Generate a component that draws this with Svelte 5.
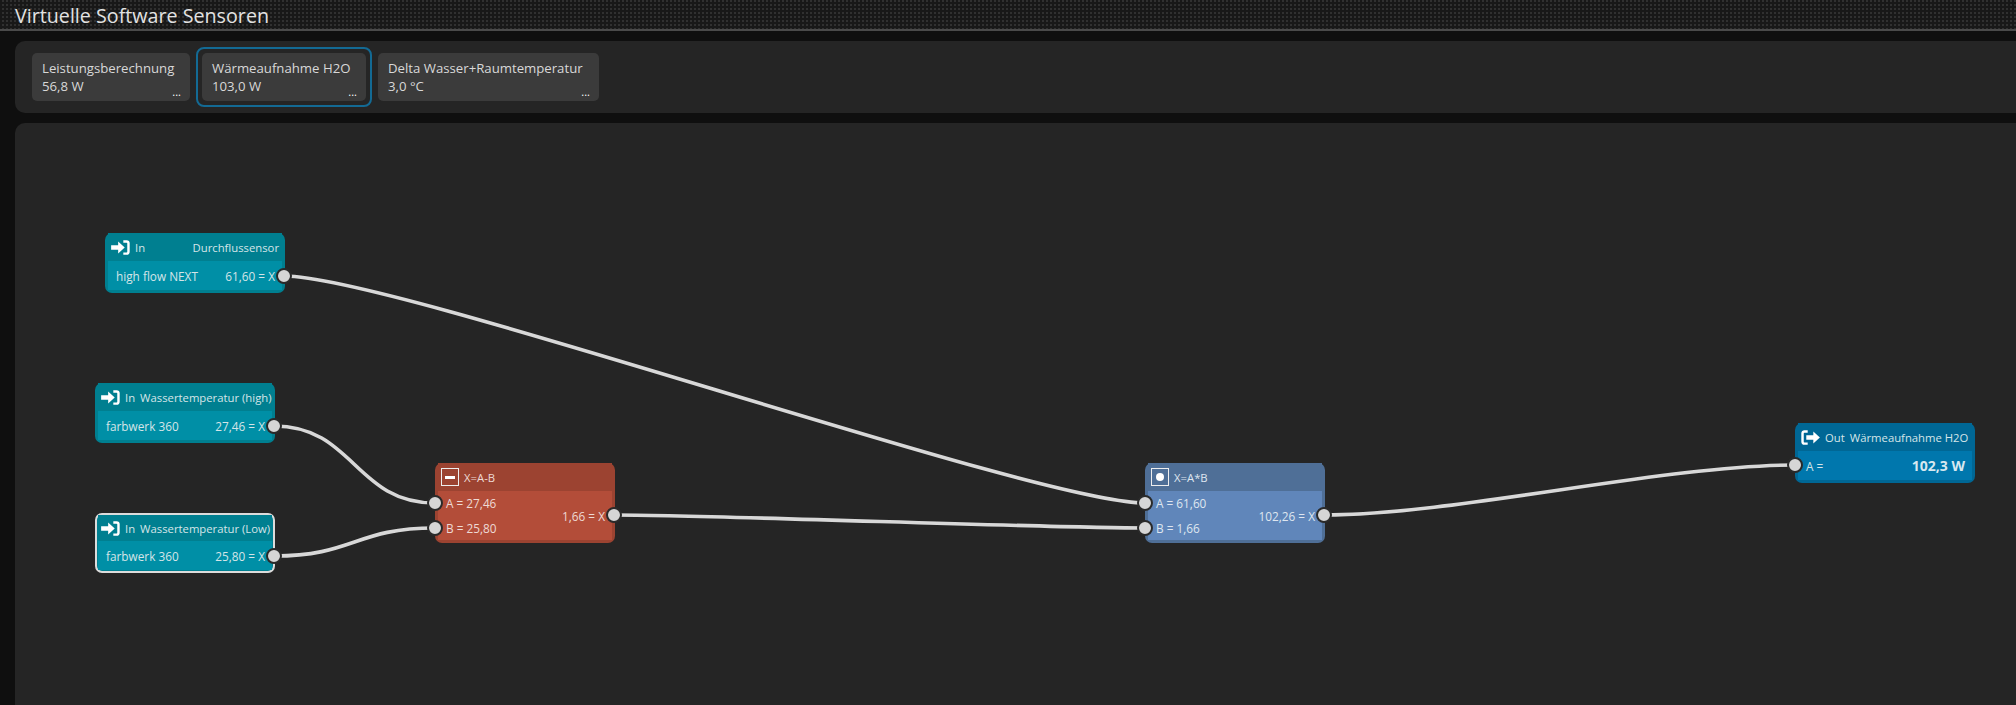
<script>
    const tiles = [
        { name: 'Leistungsberechnung', value: '56,8 W', width: 158 },
        { name: 'Wärmeaufnahme H2O', value: '103,0 W', width: 164, selected: true },
        { name: 'Delta Wasser+Raumtemperatur', value: '3,0 °C', width: 221 }
    ];

    // canvas coordinates are page coordinates minus the canvas origin
    const originX = 15;
    const originY = 123;

    const nodes = [
        { id: 'flow', kind: 'input', icon: 'in', x: 105, y: 233, h: 60, label: 'In', title: 'Durchflussensor', titleEnd: true, left: ['high flow NEXT'], right: '61,60 = X' },
        { id: 'high', kind: 'input', icon: 'in', x: 95, y: 383, h: 60, label: 'In', title: 'Wassertemperatur (high)', left: ['farbwerk 360'], right: '27,46 = X' },
        { id: 'low', kind: 'input', icon: 'in', x: 95, y: 513, h: 60, label: 'In', title: 'Wassertemperatur (Low)', left: ['farbwerk 360'], right: '25,80 = X', active: true },
        { id: 'sub', kind: 'minus', icon: 'minus', x: 435, y: 463, h: 80, label: 'X=A-B', left: ['A = 27,46', 'B = 25,80'], right: '1,66 = X', inputs: [40, 65] },
        { id: 'mul', kind: 'times', icon: 'dot', x: 1145, y: 463, h: 80, label: 'X=A*B', left: ['A = 61,60', 'B = 1,66'], right: '102,26 = X', inputs: [40, 65] },
        { id: 'out', kind: 'output', icon: 'out', x: 1795, y: 423, h: 60, label: 'Out', title: 'Wärmeaufnahme H2O', left: ['A ='], total: '102,3 W', inputs: [42] }
    ];

    const wires = [
        [284, 276, 1145, 503, 110],
        [274, 426, 435, 503, 80],
        [274, 556, 435, 528, 80],
        [614, 515, 1145, 528, 100],
        [1324, 515, 1795, 465, 130]
    ];

    function wirePath([x1, y1, x2, y2, bend]) {
        const ax = x1 - originX;
        const ay = y1 - originY;
        const bx = x2 - originX;
        const by = y2 - originY;
        return `M${ax} ${ay} C${ax + bend} ${ay} ${bx - bend} ${by} ${bx} ${by}`;
    }
</script>

<div class="page">
    <header class="title-bar">
        <h1>Virtuelle Software Sensoren</h1>
    </header>

    <section class="toolbar">
        {#each tiles as tile}
            <div class="tile-wrap" class:selected={tile.selected}>
                <div class="tile" style="width: {tile.width}px">
                    <div class="tile-name">{tile.name}</div>
                    <div class="tile-value">{tile.value}</div>
                    <span class="tile-more">...</span>
                </div>
            </div>
        {/each}
    </section>

    <section class="canvas">
        <svg class="wires" width="2001" height="582">
            {#each wires as wire}
                <path d={wirePath(wire)} />
            {/each}
        </svg>

        {#each nodes as node}
            <div
                class="node {node.kind}"
                class:active={node.active}
                style="left: {node.x - originX}px; top: {node.y - originY}px; height: {node.h}px"
            >
                <div class="node-head">
                    {#if node.icon === 'in'}
                        <svg class="icon" viewBox="0 0 20 16" width="19" height="15">
                            <path d="M0 5.5h7.5V1.500L14.500 8l-7 6.500v-4H0z" fill="#fff" />
                            <path d="M13 1.500h3.500a2 2 0 0 1 2 2v9a2 2 0 0 1-2 2H13" fill="none" stroke="#fff" stroke-width="2.6" />
                        </svg>
                    {:else if node.icon === 'out'}
                        <svg class="icon" viewBox="0 0 20 16" width="19" height="15">
                            <path d="M7 1.500H3.500a2 2 0 0 0-2 2v9a2 2 0 0 0 2 2H7" fill="none" stroke="#fff" stroke-width="2.6" />
                            <path d="M5.500 5.500H13V1.500L20 8l-7 6.500v-4H5.500z" fill="#fff" />
                        </svg>
                    {:else}
                        <span class="op-box">
                            {#if node.icon === 'minus'}
                                <span class="op-minus"></span>
                            {:else}
                                <span class="op-dot"></span>
                            {/if}
                        </span>
                    {/if}
                    <span class="node-label">{node.label}</span>
                    {#if node.title}
                        <span class="node-title" class:push={node.titleEnd}>{node.title}</span>
                    {/if}
                </div>
                <div class="node-body">
                    <div class="left-col">
                        {#each node.left as line}
                            <div>{line}</div>
                        {/each}
                    </div>
                    {#if node.right}
                        <div class="right-col">{node.right}</div>
                    {/if}
                    {#if node.total}
                        <div class="total">{node.total}</div>
                    {/if}
                </div>

                {#each node.inputs ?? [] as top}
                    <span class="port port-in" style="top: {top}px"></span>
                {/each}
                {#if node.right}
                    <span class="port port-out"></span>
                {/if}
            </div>
        {/each}
    </section>
</div>

<style>
    :global(body) {
        margin: 0;
        background: #0f0f0f;
    }

    .page {
        height: 705px;
        overflow: hidden;
        font-family: "Open Sans", "Noto Sans", sans-serif;
        color: #d8d8d8;
    }

    .title-bar {
        height: 29px;
        border-bottom: 2px solid #4a4a4a;
        background-color: #181818;
        background-image: conic-gradient(#303030 25%, transparent 0);
        background-size: 4px 4px;
        padding-left: 15px;
    }

    h1 {
        margin: 0;
        font-size: 19.7px;
        line-height: 31px;
        font-weight: 400;
        color: #e2e2e2;
    }

    .toolbar {
        box-sizing: border-box;
        height: 72px;
        margin: 10px 0 10px 15px;
        padding: 0 12px;
        display: flex;
        align-items: center;
        gap: 2px;
        background: #252525;
        border-radius: 10px 0 0 10px;
    }

    .tile-wrap {
        flex: none;
        padding: 3px;
        border: 2px solid transparent;
        border-radius: 8px;
    }

    .tile-wrap.selected {
        padding: 4px;
        margin: 0 -1px;
        border-color: #136a94;
    }

    .tile {
        box-sizing: border-box;
        position: relative;
        height: 48px;
        padding: 6px 10px;
        background: #3b3b3b;
        border-radius: 5px;
        font-size: 13.2px;
        line-height: 18px;
        white-space: nowrap;
    }

    .tile-more {
        position: absolute;
        right: 9px;
        bottom: 4px;
        font-size: 11px;
        line-height: 11px;
        color: #fff;
    }

    .canvas {
        position: relative;
        height: 582px;
        margin-left: 15px;
        background: #252525;
        border-top-left-radius: 10px;
    }

    .wires {
        position: absolute;
        inset: 0;
    }

    .wires path {
        fill: none;
        stroke: #d8d8d8;
        stroke-width: 3.6;
    }

    .node {
        --head: #007f90;
        --main: #008fa6;
        --edge: #007f90;
        box-sizing: border-box;
        position: absolute;
        width: 180px;
        display: flex;
        flex-direction: column;
        padding: 0 3px 3px;
        background: var(--edge);
        border-radius: 7px;
        font-size: 11.8px;
        color: #d5e5e8;
    }

    .node.active {
        border: 2px solid #dcdcdc;
        padding: 0 1px 1px;
    }

    .node.minus {
        --head: #9c4331;
        --main: #b34d39;
        --edge: #9c4331;
        color: #eedad5;
    }

    .node.times {
        --head: #4f6f97;
        --main: #6086ba;
        --edge: #4f6f97;
        color: #dfe6f0;
    }

    .node.output {
        --head: #006795;
        --main: #0077ad;
        --edge: #006795;
    }

    .node-head {
        height: 28px;
        flex: none;
        display: flex;
        align-items: center;
        gap: 5px;
        padding: 0 3px;
        background: var(--head);
        white-space: nowrap;
        font-size: 11.3px;
    }

    .node.active .node-head {
        height: 26px;
    }

    .icon {
        flex: none;
    }

    .op-box {
        box-sizing: border-box;
        width: 18px;
        height: 18px;
        display: flex;
        align-items: center;
        justify-content: center;
        border: 1.5px solid #eee;
    }

    .op-minus {
        width: 10px;
        height: 3px;
        background: #fff;
    }

    .op-dot {
        width: 8px;
        height: 8px;
        border-radius: 50%;
        background: #fff;
    }

    .node-title.push {
        margin-left: auto;
    }

    .node-body {
        flex: 1;
        display: flex;
        align-items: center;
        justify-content: space-between;
        padding: 0 7px 0 8px;
        background: var(--main);
        white-space: nowrap;
    }

    .left-col {
        display: flex;
        flex-direction: column;
        gap: 9px;
    }

    .total {
        font-size: 14px;
        font-weight: 700;
        color: #d7e8f0;
    }

    .port {
        box-sizing: border-box;
        position: absolute;
        width: 16px;
        height: 16px;
        border-radius: 50%;
        background: #d6d6d6;
        border: 2px solid #2a2a2a;
    }

    .port-in {
        left: -8px;
        margin-top: -8px;
    }

    .port-out {
        right: -7px;
        top: 43px;
        margin-top: -8px;
    }

    .node.active .port-out {
        top: 41px;
        right: -9px;
    }

    .node.minus .port-out,
    .node.times .port-out {
        top: 52px;
    }
</style>
